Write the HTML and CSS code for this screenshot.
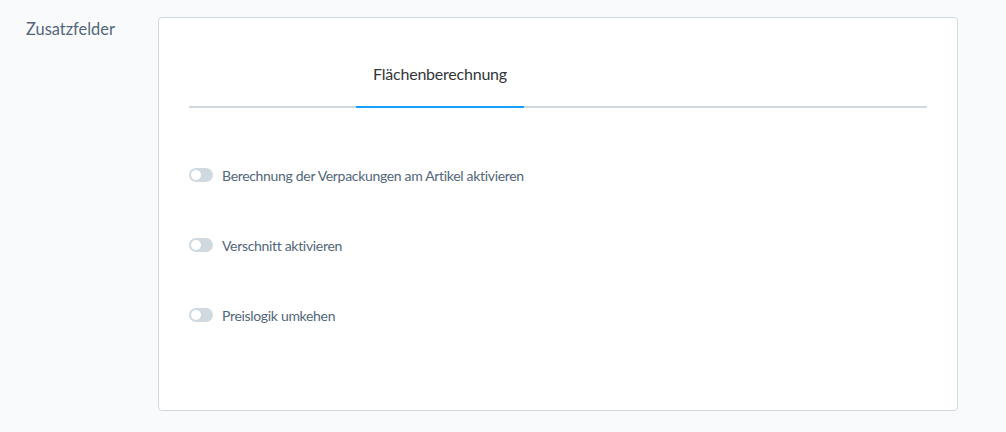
FILE: index.html
```html
<!DOCTYPE html>
<html lang="de">
<head>
<meta charset="utf-8">
<title>Zusatzfelder</title>
<link rel="stylesheet" href="styles.css">
</head>
<body>
<div class="page">
  <div class="section-label">Zusatzfelder</div>
  <div class="card">
    <nav class="tabs">
      <div class="tab tab-active">Flächenberechnung</div>
    </nav>
    <div class="fields">
      <label class="field">
        <span class="switch"><span class="knob"></span></span>
        <span class="field-label">Berechnung der Verpackungen am Artikel aktivieren</span>
      </label>
      <label class="field">
        <span class="switch"><span class="knob"></span></span>
        <span class="field-label">Verschnitt aktivieren</span>
      </label>
      <label class="field">
        <span class="switch"><span class="knob"></span></span>
        <span class="field-label">Preislogik umkehen</span>
      </label>
    </div>
  </div>
</div>
</body>
</html>
```
FILE: styles.css
```css
* { box-sizing: border-box; }
html, body {
  margin: 0;
  background: #f9fafb;
  font-family: "Lato", "Liberation Sans", sans-serif;
}
.page {
  display: flex;
  align-items: flex-start;
  padding: 17px 48px 0 25px;
}
.section-label {
  width: 133px;
  flex: none;
  font-size: 16.4px;
  line-height: 24px;
  color: #52667a;
  padding-left: 1px;
}
.card {
  width: 800px;
  height: 394px;
  flex: none;
  background: #fff;
  border: 1px solid #d1d9e0;
  border-radius: 4px;
  padding: 0 30px;
}
.tabs {
  display: flex;
  border-bottom: 2px solid #d1d9e0;
  padding-left: 167px;
}
.tab {
  width: 168px;
  text-align: center;
  font-size: 16px;
  letter-spacing: -0.22px;
  line-height: 20px;
  color: #32363a;
  padding: 46px 0 22px;
  margin-bottom: -2px;
}
.tab-active {
  border-bottom: 2px solid #189eff;
}
.fields {
  display: flex;
  flex-direction: column;
  gap: 50px;
  padding-top: 57px;
}
.field {
  display: flex;
  align-items: center;
  gap: 9px;
  height: 20px;
}
.switch {
  width: 24px;
  height: 14px;
  border-radius: 7px;
  background: #d1d9e0;
  flex: none;
  display: flex;
  align-items: center;
  padding-left: 2px;
}
.knob {
  width: 10px;
  height: 10px;
  border-radius: 50%;
  background: #fff;
}
.field-label {
  font-size: 14px;
  letter-spacing: -0.32px;
  color: #52667a;
}
```
